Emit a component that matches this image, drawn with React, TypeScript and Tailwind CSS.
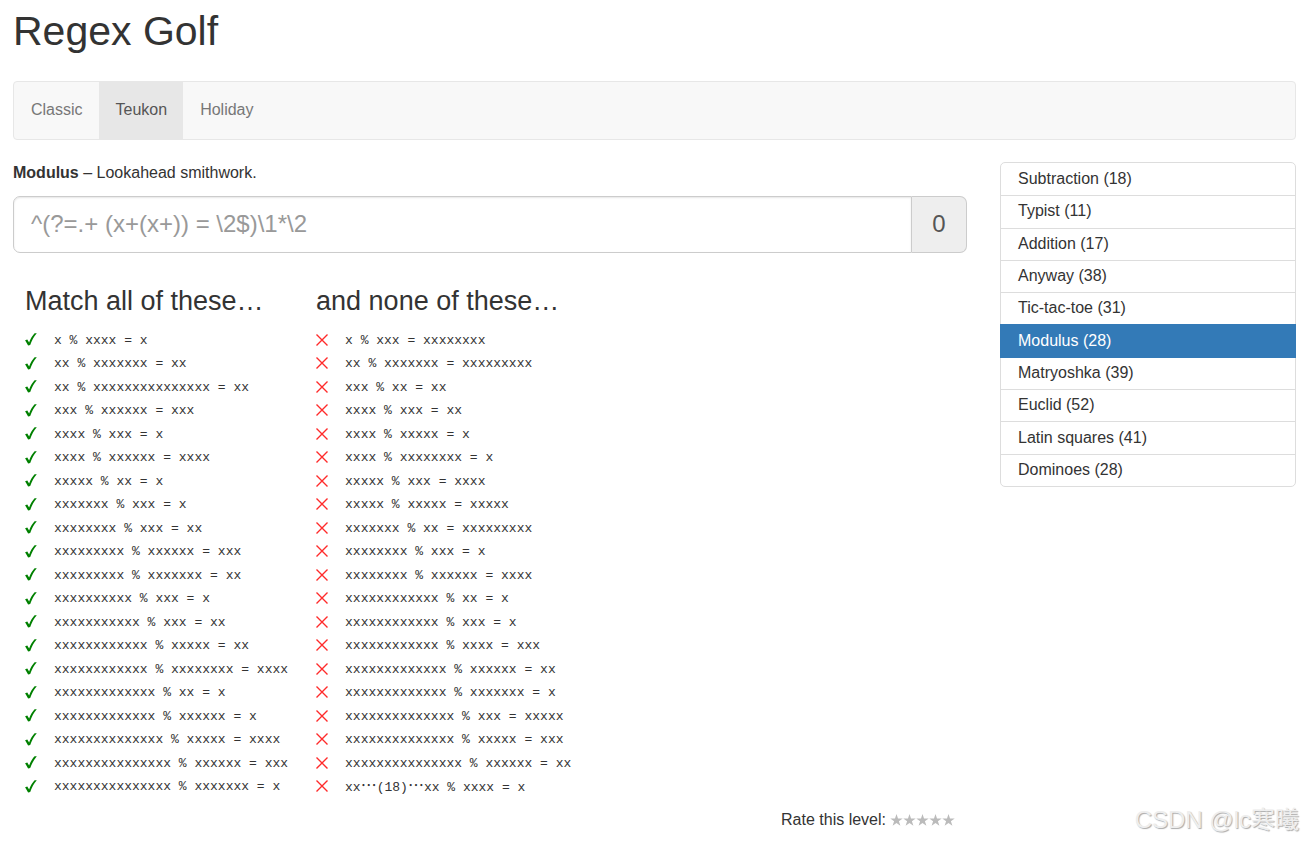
import { useState } from "react";

const tabs = ["Classic", "Teukon", "Holiday"];

const levels = [
  { name: "Subtraction", best: 18 },
  { name: "Typist", best: 11 },
  { name: "Addition", best: 17 },
  { name: "Anyway", best: 38 },
  { name: "Tic-tac-toe", best: 31 },
  { name: "Modulus", best: 28 },
  { name: "Matryoshka", best: 39 },
  { name: "Euclid", best: 52 },
  { name: "Latin squares", best: 41 },
  { name: "Dominoes", best: 28 },
];

// Each triple holds the lengths of the x runs in "a % b = c".
const equation = ([a, b, c]: number[]) =>
  `${"x".repeat(a)} % ${"x".repeat(b)} = ${"x".repeat(c)}`;

const matching = [
  [1, 4, 1], [2, 7, 2], [2, 15, 2], [3, 6, 3], [4, 3, 1],
  [4, 6, 4], [5, 2, 1], [7, 3, 1], [8, 3, 2], [9, 6, 3],
  [9, 7, 2], [10, 3, 1], [11, 3, 2], [12, 5, 2], [12, 8, 4],
  [13, 2, 1], [13, 6, 1], [14, 5, 4], [15, 6, 3], [15, 7, 1],
].map(equation);

const rejected = [
  ...[
    [1, 3, 8], [2, 7, 9], [3, 2, 2], [4, 3, 2], [4, 5, 1],
    [4, 8, 1], [5, 3, 4], [5, 5, 5], [7, 2, 9], [8, 3, 1],
    [8, 6, 4], [12, 2, 1], [12, 3, 1], [12, 4, 3], [13, 6, 2],
    [13, 7, 1], [14, 3, 5], [14, 5, 3], [15, 6, 2],
  ].map(equation),
  "xx…(18)…xx % xxxx = x",
];

function Check() {
  return (
    <svg viewBox="0 0 12 13" className="mb-0.5 h-[13px] w-3 shrink-0" aria-hidden="true">
      <path d="M0.1 7.3 2.3 6.4 4.1 9.4 C5.5 5.8 7.4 2.6 9.6 0.3 L11.8 0.3 C9 3.6 6.8 7.4 5.2 12 L3.1 12.5 Z" fill="#008000" />
    </svg>
  );
}

function Cross() {
  return (
    <svg viewBox="0 0 12 12" className="mb-0.5 size-3 shrink-0" aria-hidden="true">
      <path d="M0.5 0.5 11.5 11.5 M11.5 0.5 0.5 11.5" stroke="#ff2a2a" strokeWidth="1.4" fill="none" />
    </svg>
  );
}

// The ellipsis takes the full-width, vertically centred form.
function Row({ text }: { text: string }) {
  return (
    <span className="font-['Liberation_Mono',monospace] text-[13px] leading-5 whitespace-pre">
      {text.split(/(…)/).map((part, i) =>
        part === "…" ? (
          <span key={i} lang="zh-CN" className="font-['Noto_Sans_CJK_TC',sans-serif] text-base leading-none">
            …
          </span>
        ) : (
          part
        ),
      )}
    </span>
  );
}

function Column({ title, rows, pass }: { title: string; rows: string[]; pass: boolean }) {
  return (
    <section>
      <h2 className="mb-[13px] text-[27px] leading-[30px]">{title}</h2>
      <ul className="grid min-h-[470px] auto-rows-fr">
        {rows.map((row) => (
          <li key={row} className="flex items-center gap-[17px]">
            {pass ? <Check /> : <Cross />}
            <Row text={row} />
          </li>
        ))}
      </ul>
    </section>
  );
}

export default function App() {
  const [tab, setTab] = useState("Teukon");
  const [level, setLevel] = useState("Modulus");
  const [pattern, setPattern] = useState("");

  return (
    <div className="relative min-h-screen bg-white pr-[7px] pl-[13px] font-['Liberation_Sans',Arial,sans-serif] text-base leading-[22px] text-[#333]">
      <h1 className="pt-2 text-[41px] leading-[46px]">Regex Golf</h1>

      <nav className="mt-[27px] flex h-[59px] overflow-hidden rounded-[4px] border border-[#e7e7e7] bg-[#f8f8f8]">
        {tabs.map((name) => (
          <a
            key={name}
            href="#"
            onClick={() => setTab(name)}
            className={`flex items-center pr-4 pb-0.5 pl-[17px] ${
              tab === name ? "bg-[#e7e7e7] text-[#555]" : "text-[#777]"
            }`}
          >
            {name}
          </a>
        ))}
      </nav>

      <div className="mt-[22px] flex items-start gap-[33px]">
        <main className="min-w-0 flex-1">
          <label htmlFor="pattern" className="block">
            <b>Modulus</b> – Lookahead smithwork.
          </label>
          <div className="mt-3 flex h-[57px] text-2xl">
            <input
              id="pattern"
              type="text"
              value={pattern}
              onChange={(e) => setPattern(e.target.value)}
              placeholder="^(?=.+ (x+(x+)) = \2$)\1*\2"
              className="min-w-0 flex-1 rounded-l-[7px] border border-[#ccc] bg-white px-[17px] pb-0.5 text-[#555] shadow-[inset_0_1px_2px_rgba(0,0,0,0.1)] outline-none placeholder:text-[#999]"
            />
            <output
              htmlFor="pattern"
              className="flex w-[55px] items-center justify-center rounded-r-[7px] border border-l-0 border-[#ccc] bg-[#eee] pb-0.5 text-[#555]"
            >
              0
            </output>
          </div>

          <div className="mt-[33px] flex gap-[28px] pl-3">
            <Column title="Match all of these…" rows={matching} pass />
            <Column title="and none of these…" rows={rejected} pass={false} />
          </div>

          <div className="mt-2.5 flex justify-end gap-1 pr-3">
            <span>Rate this level:</span>
            <span className="flex text-[#bbb]">
              {[1, 2, 3, 4, 5].map((n) => (
                <button key={n} type="button" aria-label={`${n} stars`} className="flex w-[13px] items-center">
                  <svg viewBox="0 0 13 12" className="h-3 w-[13px]" fill="currentColor" aria-hidden="true">
                    <path d="M6.5 0 8 4.4 12.7 4.4 8.9 7.2 10.4 11.8 6.5 9 2.6 11.8 4.1 7.2 0.3 4.4 5 4.4Z" />
                  </svg>
                </button>
              ))}
            </span>
          </div>
        </main>

        <aside className="w-[296px] shrink-0">
          <ul className="grid min-h-[325px] auto-rows-fr rounded-[5px] border border-[#ddd]">
            {levels.map(({ name, best }) => (
              <li key={name} className="flex border-[#ddd] not-first:border-t">
                <a
                  href="#"
                  onClick={() => setLevel(name)}
                  className={`flex flex-1 items-center pb-px ${
                    level === name ? "relative -m-px bg-[#337ab7] px-[18px] text-white" : "px-[17px]"
                  }`}
                >
                  {name} ({best})
                </a>
              </li>
            ))}
          </ul>
        </aside>
      </div>

      <div className="absolute right-1 bottom-[6px] font-['Liberation_Sans','Noto_Sans_CJK_SC',sans-serif] text-2xl leading-8 text-[#eee] [text-shadow:1px_1px_1px_#aaa]">
        CSDN @lc寒曦
      </div>
    </div>
  );
}
